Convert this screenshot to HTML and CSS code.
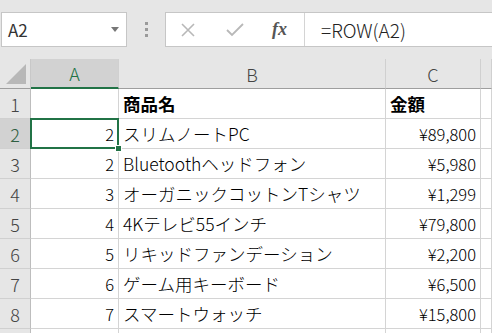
FILE: index.html
```html
<!DOCTYPE html>
<html lang="ja">
<head>
    <meta charset="UTF-8">
    <title>Sheet</title>
    <link rel="stylesheet" href="styles.css">
</head>
<body>
    <div class="formula-bar">
        <div class="name-box">
            <span>A2</span>
            <svg class="drop" width="8" height="5" viewBox="0 0 8 5"><path d="M0 0h8L4 5z" fill="#777"/></svg>
        </div>
        <div class="grip">
            <i></i><i></i><i></i>
        </div>
        <div class="formula-box">
            <div class="fx-buttons">
                <svg width="16" height="16" viewBox="0 0 16 16"><path d="M2 2l12 12M14 2L2 14" stroke="#b8b8b8" stroke-width="1.6" fill="none"/></svg>
                <svg width="18" height="16" viewBox="0 0 18 16"><path d="M1 8l5 5L17 2" stroke="#b8b8b8" stroke-width="1.8" fill="none"/></svg>
                <span class="fx">fx</span>
            </div>
            <div class="formula-input">=ROW(A2)</div>
        </div>
    </div>

    <div class="sheet">
        <div class="hd corner"><span class="tri"></span></div>
        <div class="hd col active">A</div>
        <div class="hd col">B</div>
        <div class="hd col">C</div>
        <div class="hd col"></div>

        <div class="hd row">1</div>
        <div class="cell"></div>
        <div class="cell bold">商品名</div>
        <div class="cell bold">金額</div>
        <div class="cell"></div>

        <div class="hd row active">2</div>
        <div class="cell num selected">2</div>
        <div class="cell">スリムノートPC</div>
        <div class="cell num">¥89,800</div>
        <div class="cell"></div>

        <div class="hd row">3</div>
        <div class="cell num">2</div>
        <div class="cell">Bluetoothヘッドフォン</div>
        <div class="cell num">¥5,980</div>
        <div class="cell"></div>

        <div class="hd row">4</div>
        <div class="cell num">3</div>
        <div class="cell">オーガニックコットンTシャツ</div>
        <div class="cell num">¥1,299</div>
        <div class="cell"></div>

        <div class="hd row">5</div>
        <div class="cell num">4</div>
        <div class="cell">4Kテレビ55インチ</div>
        <div class="cell num">¥79,800</div>
        <div class="cell"></div>

        <div class="hd row">6</div>
        <div class="cell num">5</div>
        <div class="cell">リキッドファンデーション</div>
        <div class="cell num">¥2,200</div>
        <div class="cell"></div>

        <div class="hd row">7</div>
        <div class="cell num">6</div>
        <div class="cell">ゲーム用キーボード</div>
        <div class="cell num">¥6,500</div>
        <div class="cell"></div>

        <div class="hd row">8</div>
        <div class="cell num">7</div>
        <div class="cell">スマートウォッチ</div>
        <div class="cell num">¥15,800</div>
        <div class="cell"></div>

        <div class="hd row"></div>
        <div class="cell"></div>
        <div class="cell"></div>
        <div class="cell"></div>
        <div class="cell"></div>
    </div>
</body>
</html>
```

FILE: styles.css
```css
body {
    margin: 0;
    background-color: #e6e6e6;
    font-family: "Noto Sans CJK JP", "Noto Sans", sans-serif;
    color: #000;
    overflow: hidden;
}
.formula-bar {
    display: flex;
    height: 59px;
    box-sizing: border-box;
    padding: 12px 0 12px 1px;
}
.name-box {
    width: 126px;
    box-sizing: border-box;
    background-color: #fff;
    border: 1px solid #c6c6c6;
    display: flex;
    align-items: center;
    justify-content: space-between;
    padding: 0 7px 0 6px;
    font-size: 17px;
    color: #333;
}
.grip {
    width: 38px;
    display: flex;
    flex-direction: column;
    align-items: center;
    justify-content: center;
    gap: 3px;
}
.grip i {
    width: 3px;
    height: 3px;
    background-color: #9a9a9a;
}
.formula-box {
    flex: 1;
    display: flex;
    background-color: #fff;
    border: 1px solid #c6c6c6;
    border-right: none;
}
.fx-buttons {
    width: 139px;
    box-sizing: border-box;
    border-right: 1px solid #d4d4d4;
    display: flex;
    align-items: center;
    padding-left: 14px;
    gap: 30px;
}
.fx {
    font-family: "Liberation Serif", serif;
    font-style: italic;
    font-weight: bold;
    font-size: 18px;
    color: #555;
    margin-left: -2px;
}
.formula-input {
    display: flex;
    align-items: center;
    padding-left: 16px;
    font-size: 19px;
    font-weight: 300;
    color: #222;
}
.sheet {
    display: grid;
    grid-template-columns: 31px 88px 267px 95px 1fr;
    grid-auto-rows: 30px;
    background-color: #fff;
}
.hd {
    background-color: #e6e6e6;
    color: #444;
    font-size: 18px;
    font-weight: 300;
    display: flex;
    align-items: center;
    justify-content: center;
    box-sizing: border-box;
}
.corner {
    border-right: 1px solid #c8c8c8;
    border-bottom: 1px solid #9e9e9e;
    position: relative;
}
.tri {
    position: absolute;
    right: 4px;
    bottom: 4px;
    width: 20px;
    height: 20px;
    background-color: #b8b8b8;
    clip-path: polygon(100% 0, 100% 100%, 0 100%);
}
.col {
    border-right: 1px solid #d0d0d0;
    border-bottom: 1px solid #9e9e9e;
}
.col.active {
    background-color: #d2d2d2;
    color: #217346;
    border-bottom: 2px solid #217346;
}
.row {
    border-right: 1px solid #bdbdbd;
    border-bottom: 1px solid #d0d0d0;
}
.row.active {
    background-color: #d2d2d2;
    color: #2f5f42;
}
.cell {
    box-sizing: border-box;
    border-right: 1px solid #d4d4d4;
    border-bottom: 1px solid #d4d4d4;
    font-size: 17.5px;
    font-weight: 300;
    display: flex;
    align-items: center;
    padding: 0 4px;
    white-space: nowrap;
    overflow: hidden;
}
.cell.num {
    justify-content: flex-end;
    font-size: 16.5px;
}
.cell.bold {
    font-weight: bold;
}
.cell.selected {
    position: relative;
    overflow: visible;
}
.cell.selected::before {
    content: "";
    position: absolute;
    left: -1px;
    top: -1px;
    right: -1px;
    bottom: -1px;
    border: 2px solid #217346;
}
.cell.selected::after {
    content: "";
    position: absolute;
    right: -4px;
    bottom: -4px;
    width: 5px;
    height: 5px;
    background-color: #217346;
    border: 1px solid #fff;
}
```
